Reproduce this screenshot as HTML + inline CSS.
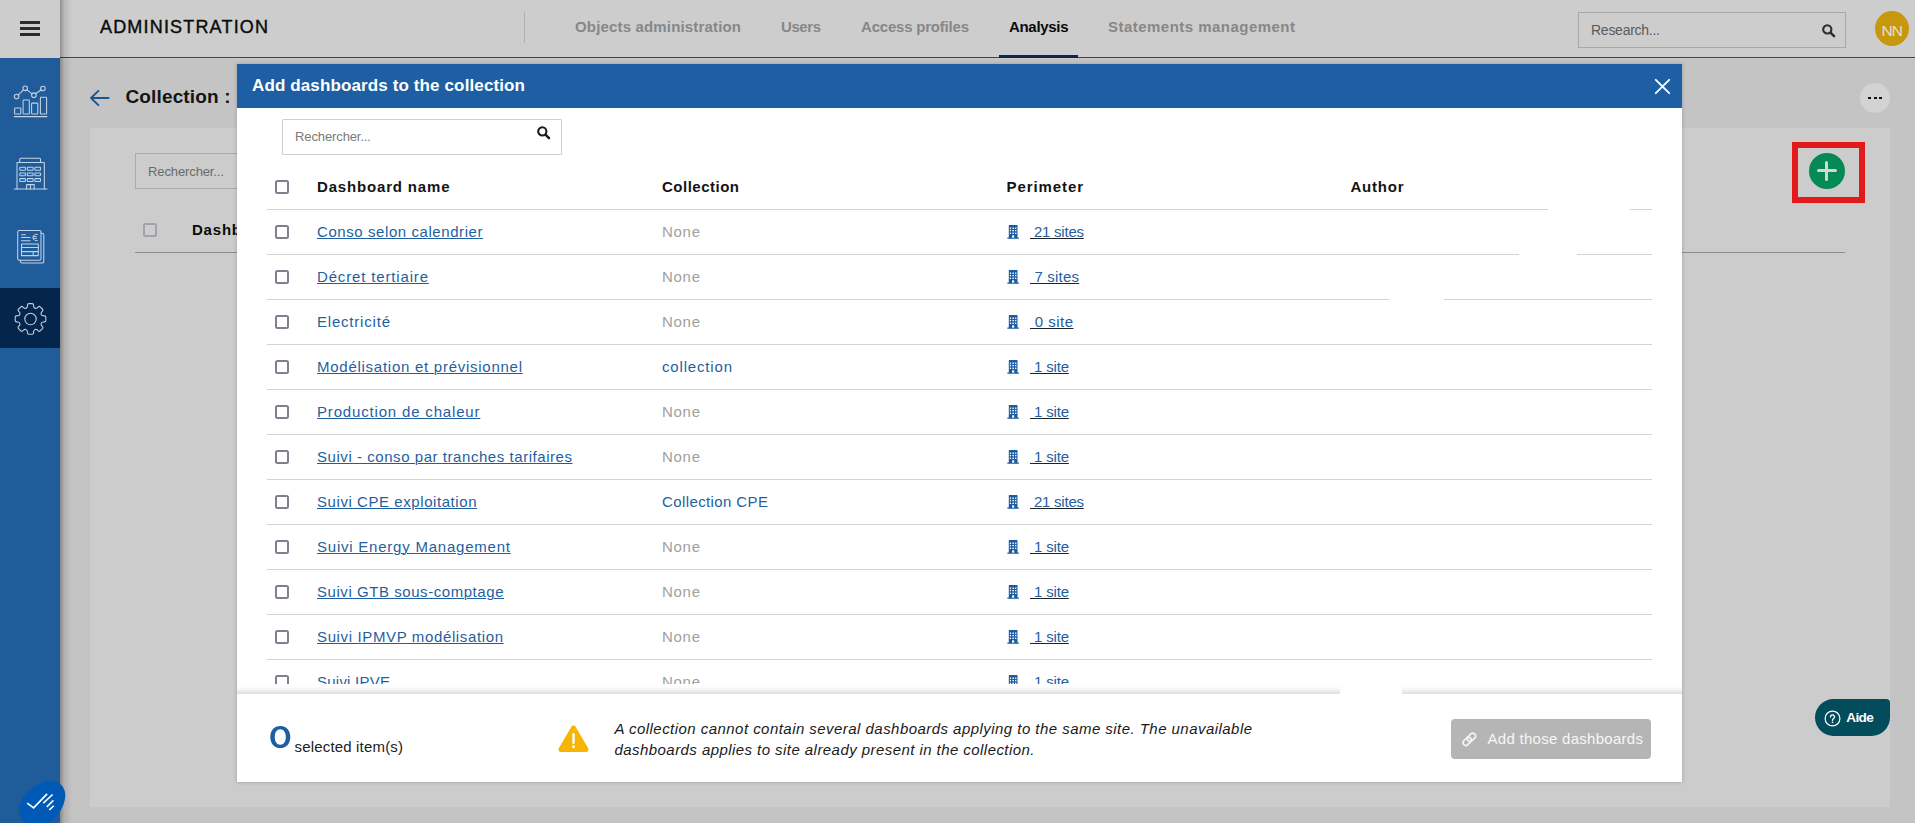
<!DOCTYPE html>
<html lang="en"><head><meta charset="utf-8"><title>Administration</title>
<style>
*{box-sizing:border-box;margin:0;padding:0}
html,body{width:1915px;height:823px;overflow:hidden;background:#c4c4c4;font-family:"Liberation Sans",sans-serif}
#root{position:relative;width:1915px;height:823px;overflow:hidden;background:#c4c4c4}
.abs{position:absolute}
.t{position:absolute;white-space:nowrap;line-height:1;display:block}
.cb{position:absolute;width:14px;height:14px;border:2px solid #7f7f90;border-radius:2.5px;background:#fff}
.hl{position:absolute;left:267px;width:1385px;height:1px;background:#d4d4d4}
.bld{position:absolute;display:block}
svg{display:block;position:absolute}
</style></head><body><div id="root">

<!-- ===== dimmed page behind ===== -->
<div class="abs" style="left:60px;top:0;width:1855px;height:57px;background:#cdcdcd"></div>
<div class="abs" style="left:60px;top:56.8px;width:1855px;height:1.2px;background:#36475d"></div>
<div class="abs" style="left:60px;top:58px;width:1855px;height:1px;background:#c8c8c8"></div>
<div class="abs" style="left:0;top:0;width:60px;height:58px;background:#cdcdcd"></div>
<!-- hamburger -->
<div class="abs" style="left:20px;top:21px;width:20px;height:2.6px;background:#2a2a2a"></div>
<div class="abs" style="left:20px;top:27.2px;width:20px;height:2.6px;background:#2a2a2a"></div>
<div class="abs" style="left:20px;top:33.4px;width:20px;height:2.6px;background:#2a2a2a"></div>
<span id="adm" class="t" style="left:100px;top:18.06px;font-size:18px;font-weight:400;color:#0b0b0b;letter-spacing:1.179px;-webkit-text-stroke:0.4px #0b0b0b;">ADMINISTRATION</span>
<div class="abs" style="left:524px;top:12px;width:1px;height:31px;background:#b1b1b1"></div>
<span id="tab1" class="t" style="left:575px;top:19.30px;font-size:15px;font-weight:700;color:#878787;letter-spacing:0.164px;">Objects administration</span><span id="tab2" class="t" style="left:781px;top:19.30px;font-size:15px;font-weight:700;color:#878787;letter-spacing:-0.426px;">Users</span><span id="tab3" class="t" style="left:861px;top:19.30px;font-size:15px;font-weight:700;color:#878787;letter-spacing:-0.206px;">Access profiles</span><span id="tab4" class="t" style="left:1009px;top:19.30px;font-size:15px;font-weight:700;color:#0a0a0a;letter-spacing:-0.315px;">Analysis</span><span id="tab5" class="t" style="left:1108px;top:19.30px;font-size:15px;font-weight:700;color:#878787;letter-spacing:0.472px;">Statements management</span>
<div class="abs" style="left:999px;top:54.6px;width:79px;height:3px;background:#0b2747"></div>
<!-- research box -->
<div class="abs" style="left:1578px;top:12px;width:268px;height:36px;border:1px solid #a9a9a9"></div>
<span id="research" class="t" style="left:1591px;top:23.35px;font-size:14px;font-weight:400;color:#5a5a5a;letter-spacing:-0.259px;">Research...</span>
<svg style="left:1822.2px;top:23.8px" width="15" height="15" viewBox="0 0 15 15"><circle cx="5.3" cy="5.4" r="4.1" fill="none" stroke="#2c2c2c" stroke-width="2.1"/><path d="M8.7 8.8L12.1 12.2" stroke="#2c2c2c" stroke-width="2.5" stroke-linecap="round"/></svg>
<div class="abs" style="left:1875px;top:11px;width:34px;height:35px;border-radius:50%;background:#c7980b"></div>
<span id="nn" class="t" style="left:1881.5px;top:22.58px;font-size:15.5px;font-weight:400;color:#e4e0d4;letter-spacing:-0.891px;">NN</span>

<!-- content -->
<svg style="left:89px;top:89px" width="22" height="18" viewBox="0 0 22 18"><path d="M19.6 9H2.4M9.4 1.9L2 9l7.4 7.1" fill="none" stroke="#1b5591" stroke-width="1.9" stroke-linecap="round" stroke-linejoin="round"/></svg>
<span id="colltitle" class="t" style="left:125.5px;top:86.92px;font-size:19px;font-weight:700;color:#141414;letter-spacing:0.141px;">Collection :</span>
<div class="abs" style="left:1860px;top:83px;width:30px;height:30px;border-radius:50%;background:#d3d3d3"></div>
<div class="abs" style="left:1868px;top:96.6px;width:3px;height:2.6px;background:#111"></div>
<div class="abs" style="left:1873.6px;top:96.6px;width:3px;height:2.6px;background:#111"></div>
<div class="abs" style="left:1879.2px;top:96.6px;width:3px;height:2.6px;background:#111"></div>
<div class="abs" style="left:90px;top:128px;width:1800px;height:679px;background:#cccccc"></div>
<div class="abs" style="left:135px;top:153px;width:200px;height:36px;border:1px solid #ababab"></div>
<span id="rech2" class="t" style="left:148px;top:164.50px;font-size:13px;font-weight:400;color:#6b6b6b;letter-spacing:-0.111px;">Rechercher...</span>
<div class="abs" style="left:143px;top:223px;width:14px;height:14px;border:2px solid #a2a2ab;border-radius:2.5px;background:#cdcdcd"></div>
<span id="dashb" class="t" style="left:192px;top:222.30px;font-size:15px;font-weight:700;color:#0a0a0a;letter-spacing:0.792px;">Dashboard name</span>
<div class="abs" style="left:135px;top:252px;width:1710px;height:1px;background:#8d8d8d"></div>
<!-- green plus + red annotation -->
<div class="abs" style="left:1808.9px;top:152.9px;width:36.2px;height:36.2px;border-radius:50%;background:#058a55"></div>
<div class="abs" style="left:1817px;top:169.3px;width:19.6px;height:3px;border-radius:1.5px;background:#d5d5d5"></div>
<div class="abs" style="left:1825.3px;top:160.9px;width:3px;height:19.7px;border-radius:1.5px;background:#d5d5d5"></div>
<div class="abs" style="left:1792px;top:142px;width:73px;height:61px;border:6px solid #e4191c"></div>
<!-- Aide -->
<div class="abs" style="left:1815px;top:698.8px;width:75px;height:37.2px;background:#024c5b;border-radius:18.6px 4px 18.6px 18.6px"></div>
<svg style="left:1823.8px;top:709.8px" width="17" height="17" viewBox="0 0 17 17"><circle cx="8.5" cy="8.5" r="7.4" fill="none" stroke="#fff" stroke-width="1.2"/><path d="M6.5 6.9a2 2 0 1 1 3.100 1.650c-.75.500-1.100.850-1.100 1.700" fill="none" stroke="#fff" stroke-width="1.35" stroke-linecap="round"/><circle cx="8.5" cy="12.3" r=".85" fill="#fff"/></svg>
<span id="aide" class="t" style="left:1846.3px;top:711.49px;font-size:13.6px;font-weight:700;color:#ffffff;letter-spacing:-0.656px;">Aide</span>

<!-- ===== sidebar ===== -->
<div class="abs" style="left:0;top:58px;width:60px;height:765px;background:#1f5c99"></div>
<div class="abs" style="left:0;top:288px;width:60px;height:60px;background:#05264c"></div>
<div class="abs" style="left:60px;top:0;width:12px;height:823px;background:linear-gradient(90deg,rgba(0,0,0,.30),rgba(0,0,0,.10) 35%,rgba(0,0,0,0))"></div>
<!--ICONS_START-->
<!-- chart icon -->
<svg style="left:0;top:58px" width="60" height="765" viewBox="0 58 60 765">
<g fill="none" stroke="#c3d3e6" stroke-width="1.05" stroke-linejoin="round" stroke-linecap="round">
<!-- chart -->
<path d="M14.2 116.6H47"/>
<rect x="14.6" y="107.9" width="6.2" height="6.1" rx=".6"/>
<rect x="23.1" y="99.9" width="6.2" height="14.1" rx=".6"/>
<rect x="31.6" y="103.1" width="6.2" height="10.9" rx=".6"/>
<rect x="40.4" y="97.3" width="6.2" height="16.7" rx=".6"/>
<circle cx="16.6" cy="96.5" r="2.3"/><circle cx="25.2" cy="88.3" r="2.3"/><circle cx="33.9" cy="95.2" r="2.3"/><circle cx="42.9" cy="88.5" r="2.3"/>
<path d="M18.3 94.9l5.2-5M26.9 89.8l5.2 4M35.6 93.7l5.6-3.9"/>
<!-- building -->
<path d="M14.2 189H47"/>
<path d="M17 189V162.4h27.3V189"/>
<path d="M19.7 162.4v-3.2a1 1 0 0 1 1-1h18.8a1 1 0 0 1 1 1v3.2"/>
<rect x="19.8" y="167.3" width="5.6" height="2.9" rx=".5"/><rect x="27.3" y="167.3" width="5.8" height="2.9" rx=".5"/><rect x="34.9" y="167.3" width="5.6" height="2.9" rx=".5"/>
<rect x="19.8" y="172.9" width="5.6" height="2.9" rx=".5"/><rect x="27.3" y="172.9" width="5.8" height="2.9" rx=".5"/><rect x="34.9" y="172.9" width="5.6" height="2.9" rx=".5"/>
<rect x="19.8" y="178.6" width="5.6" height="2.9" rx=".5"/><rect x="27.3" y="178.6" width="5.8" height="2.9" rx=".5"/><rect x="34.9" y="178.6" width="5.6" height="2.9" rx=".5"/>
<path d="M26.6 189v-4.4h7.6V189M30.4 184.6V189"/>
<!-- document -->
<path d="M41 233.2h1.3a1.5 1.5 0 0 1 1.5 1.5v26.8a1.5 1.5 0 0 1-1.5 1.5H22a1.5 1.5 0 0 1-1.5-1.5v-1.2"/>
<rect x="17.7" y="230.4" width="23.3" height="29.9" rx="1.5"/>
<path d="M21.5 234.7h4M21.5 237.5h8.6M21.5 240.7h8.6"/>
<path d="M37.4 234.4a3.3 3.3 0 1 0 0 6.2M33.2 236.6h3.2M33.2 238.4h3.2" stroke-width=".95"/>
<rect x="21.5" y="243.9" width="16.8" height="11.7"/>
<path d="M21.5 247.5h16.8M21.5 251.6h16.8M33.2 251.6v4"/>
</g>
<!-- gear -->
<g fill="none" stroke="#c6cdd8" stroke-width="1.1" stroke-linejoin="round">
<circle cx="30.5" cy="319" r="5.7"/>
<path d="M26.17 308.12Q27.37 307.63 27.42 306.33L27.48 304.89Q27.52 303.59 28.82 303.59L32.18 303.59Q33.48 303.59 33.52 304.89L33.58 306.33Q33.63 307.63 34.83 308.12L35.06 308.22Q36.26 308.72 37.21 307.83L38.27 306.85Q39.22 305.97 40.14 306.89L42.51 309.26Q43.43 310.18 42.55 311.13L41.57 312.19Q40.68 313.14 41.18 314.34L41.28 314.57Q41.77 315.77 43.07 315.82L44.51 315.88Q45.81 315.92 45.81 317.22L45.81 320.58Q45.81 321.88 44.51 321.92L43.07 321.98Q41.77 322.03 41.28 323.23L41.18 323.46Q40.68 324.66 41.57 325.61L42.55 326.67Q43.43 327.62 42.51 328.54L40.14 330.91Q39.22 331.83 38.27 330.95L37.21 329.97Q36.26 329.08 35.06 329.58L34.83 329.68Q33.63 330.17 33.58 331.47L33.52 332.91Q33.48 334.21 32.18 334.21L28.82 334.21Q27.52 334.21 27.48 332.91L27.42 331.47Q27.37 330.17 26.17 329.68L25.94 329.58Q24.74 329.08 23.79 329.97L22.73 330.95Q21.78 331.83 20.86 330.91L18.49 328.54Q17.57 327.62 18.45 326.67L19.43 325.61Q20.32 324.66 19.82 323.46L19.72 323.23Q19.23 322.03 17.93 321.98L16.49 321.92Q15.19 321.88 15.19 320.58L15.19 317.22Q15.19 315.92 16.49 315.88L17.93 315.82Q19.23 315.77 19.72 314.57L19.82 314.34Q20.32 313.14 19.43 312.19L18.45 311.13Q17.57 310.18 18.49 309.26L20.86 306.89Q21.78 305.97 22.73 306.85L23.79 307.83Q24.74 308.72 25.94 308.22Z"/>
</g>
</svg>
<svg style="left:15px;top:776px" width="56" height="47" viewBox="15 776 56 47">
<path d="M49 780.8c8.500 -1.200 16.800 5.000 16.300 15.000c-0.600 12.000 -9.000 24.000 -20.000 29.500c-10.000 5.000 -24.000 -1.000 -26.200 -12.000c-2.400 -12.500 12.000 -30.000 29.900 -32.500z" fill="#0059b4"/>
<g fill="none" stroke="#fff" stroke-width="1.5" stroke-linecap="butt"><path d="M27.2 803.1l6.4 4.8L47.1 793.9" stroke-width="1.7"/><path d="M43.3 803.1l9.3-8.6M46.8 806.9l6.6-6.5M49.3 809.9l4.5-4.1"/></g></svg>
<!--ICONS_END-->

<!-- ===== modal ===== -->
<div class="abs" style="left:237px;top:64px;width:1445px;height:718px;background:#fff;box-shadow:0 0 4px rgba(0,0,0,.22)"></div>
<div class="abs" style="left:237px;top:64px;width:1445px;height:44px;background:#1d5fa2"></div>
<span id="mtitle" class="t" style="left:252px;top:76.61px;font-size:17px;font-weight:700;color:#ffffff;letter-spacing:0.123px;">Add dashboards to the collection</span>
<svg style="left:1654px;top:78px" width="17" height="17" viewBox="0 0 17 17"><path d="M1.8 1.8L15.2 15.2M15.2 1.8L1.8 15.2" stroke="#fff" stroke-width="1.9" stroke-linecap="round"/></svg>
<div class="abs" style="left:282px;top:119px;width:280px;height:36px;border:1px solid #cfcfcf;border-radius:1px"></div>
<span id="rech" class="t" style="left:295px;top:129.50px;font-size:13px;font-weight:400;color:#7a7a7a;letter-spacing:-0.111px;">Rechercher...</span>
<svg style="left:537px;top:126px" width="15" height="15" viewBox="0 0 15 15"><circle cx="5.3" cy="5.4" r="4.1" fill="none" stroke="#1c1c1c" stroke-width="2.1"/><path d="M8.7 8.8L12 12.1" stroke="#1c1c1c" stroke-width="2.5" stroke-linecap="round"/></svg>
<div class="cb" style="left:275px;top:180px"></div>
<span id="h1" class="t" style="left:317px;top:179.30px;font-size:15px;font-weight:700;color:#141414;letter-spacing:0.831px;">Dashboard name</span><span id="h2" class="t" style="left:662px;top:179.30px;font-size:15px;font-weight:700;color:#141414;letter-spacing:0.498px;">Collection</span><span id="h3" class="t" style="left:1006.5px;top:179.30px;font-size:15px;font-weight:700;color:#141414;letter-spacing:0.91px;">Perimeter</span><span id="h4" class="t" style="left:1350.5px;top:179.30px;font-size:15px;font-weight:700;color:#141414;letter-spacing:0.769px;">Author</span>
<div class="hl" style="top:209px"></div>
<!-- scroll area (clipped at y=684) -->
<div class="abs" style="left:237px;top:0;width:1445px;height:684px;overflow:hidden"><div class="abs" style="left:-237px;top:0;width:1915px;height:823px">
<div class="cb" style="left:275px;top:225px"></div>
<span id="n0" class="t" style="left:317px;top:223.90px;font-size:15px;font-weight:400;color:#1f5f9f;letter-spacing:0.575px;text-decoration:underline;text-decoration-thickness:1px;text-underline-offset:1px;">Conso selon calendrier</span>
<span id="c0" class="t" style="left:662px;top:223.90px;font-size:15px;font-weight:400;color:#a0a0a0;letter-spacing:0.714px;">None</span>
<svg class="bld" style="left:1007px;top:225px" width="12" height="14" viewBox="0 0 12 14"><path fill="#1a5aa0" d="M2.3 0h7.7a0.5 0.5 0 0 1 .5.5V12.6h1.1a0.3 0.3 0 0 1 .3.3v.5a0.3 0.3 0 0 1-.3.3H0.6a0.3 0.3 0 0 1-.3-.3v-.5a0.3 0.3 0 0 1 .3-.3H1.8V0.5a0.5 0.5 0 0 1 .5-.5z"/><g fill="#fff"><rect x="2.8" y="2.5" width="1.3" height="1.4"/><rect x="5.4" y="2.5" width="1.5" height="1.4"/><rect x="8.1" y="2.5" width="1.3" height="1.4"/><rect x="2.8" y="4.9" width="1.3" height="1.4"/><rect x="5.4" y="4.9" width="1.5" height="1.4"/><rect x="8.1" y="4.9" width="1.3" height="1.4"/><rect x="2.8" y="7.6" width="1.3" height="1.4"/><rect x="5.4" y="7.6" width="1.5" height="1.4"/><rect x="8.1" y="7.6" width="1.3" height="1.4"/><rect x="5.1" y="10.3" width="2.1" height="2.4"/></g></svg>
<span id="p0" class="t" style="left:1030px;top:223.90px;font-size:15px;font-weight:400;color:#1f5f9f;letter-spacing:-0.234px;white-space:pre;text-decoration:underline;text-decoration-color:#222;text-decoration-thickness:1px;text-underline-offset:1px;"> 21 sites</span>
<div class="hl" style="top:254px"></div>
<div class="cb" style="left:275px;top:270px"></div>
<span id="n1" class="t" style="left:317px;top:268.90px;font-size:15px;font-weight:400;color:#1f5f9f;letter-spacing:0.842px;text-decoration:underline;text-decoration-thickness:1px;text-underline-offset:1px;">Décret tertiaire</span>
<span id="c1" class="t" style="left:662px;top:268.90px;font-size:15px;font-weight:400;color:#a0a0a0;letter-spacing:0.714px;">None</span>
<svg class="bld" style="left:1007px;top:270px" width="12" height="14" viewBox="0 0 12 14"><path fill="#1a5aa0" d="M2.3 0h7.7a0.5 0.5 0 0 1 .5.5V12.6h1.1a0.3 0.3 0 0 1 .3.3v.5a0.3 0.3 0 0 1-.3.3H0.6a0.3 0.3 0 0 1-.3-.3v-.5a0.3 0.3 0 0 1 .3-.3H1.8V0.5a0.5 0.5 0 0 1 .5-.5z"/><g fill="#fff"><rect x="2.8" y="2.5" width="1.3" height="1.4"/><rect x="5.4" y="2.5" width="1.5" height="1.4"/><rect x="8.1" y="2.5" width="1.3" height="1.4"/><rect x="2.8" y="4.9" width="1.3" height="1.4"/><rect x="5.4" y="4.9" width="1.5" height="1.4"/><rect x="8.1" y="4.9" width="1.3" height="1.4"/><rect x="2.8" y="7.6" width="1.3" height="1.4"/><rect x="5.4" y="7.6" width="1.5" height="1.4"/><rect x="8.1" y="7.6" width="1.3" height="1.4"/><rect x="5.1" y="10.3" width="2.1" height="2.4"/></g></svg>
<span id="p1" class="t" style="left:1030px;top:268.90px;font-size:15px;font-weight:400;color:#1f5f9f;letter-spacing:0.21px;white-space:pre;text-decoration:underline;text-decoration-color:#222;text-decoration-thickness:1px;text-underline-offset:1px;"> 7 sites</span>
<div class="hl" style="top:299px"></div>
<div class="cb" style="left:275px;top:315px"></div>
<span id="n2" class="t" style="left:317px;top:313.90px;font-size:15px;font-weight:400;color:#1f5f9f;letter-spacing:0.797px;">Electricité</span>
<span id="c2" class="t" style="left:662px;top:313.90px;font-size:15px;font-weight:400;color:#a0a0a0;letter-spacing:0.714px;">None</span>
<svg class="bld" style="left:1007px;top:315px" width="12" height="14" viewBox="0 0 12 14"><path fill="#1a5aa0" d="M2.3 0h7.7a0.5 0.5 0 0 1 .5.5V12.6h1.1a0.3 0.3 0 0 1 .3.3v.5a0.3 0.3 0 0 1-.3.3H0.6a0.3 0.3 0 0 1-.3-.3v-.5a0.3 0.3 0 0 1 .3-.3H1.8V0.5a0.5 0.5 0 0 1 .5-.5z"/><g fill="#fff"><rect x="2.8" y="2.5" width="1.3" height="1.4"/><rect x="5.4" y="2.5" width="1.5" height="1.4"/><rect x="8.1" y="2.5" width="1.3" height="1.4"/><rect x="2.8" y="4.9" width="1.3" height="1.4"/><rect x="5.4" y="4.9" width="1.5" height="1.4"/><rect x="8.1" y="4.9" width="1.3" height="1.4"/><rect x="2.8" y="7.6" width="1.3" height="1.4"/><rect x="5.4" y="7.6" width="1.5" height="1.4"/><rect x="8.1" y="7.6" width="1.3" height="1.4"/><rect x="5.1" y="10.3" width="2.1" height="2.4"/></g></svg>
<span id="p2" class="t" style="left:1030px;top:313.90px;font-size:15px;font-weight:400;color:#1f5f9f;letter-spacing:0.495px;white-space:pre;text-decoration:underline;text-decoration-color:#222;text-decoration-thickness:1px;text-underline-offset:1px;"> 0 site</span>
<div class="hl" style="top:344px"></div>
<div class="cb" style="left:275px;top:360px"></div>
<span id="n3" class="t" style="left:317px;top:358.90px;font-size:15px;font-weight:400;color:#1f5f9f;letter-spacing:0.737px;text-decoration:underline;text-decoration-thickness:1px;text-underline-offset:1px;">Modélisation et prévisionnel</span>
<span id="c3" class="t" style="left:662px;top:358.90px;font-size:15px;font-weight:400;color:#1f5f9f;letter-spacing:0.828px;">collection</span>
<svg class="bld" style="left:1007px;top:360px" width="12" height="14" viewBox="0 0 12 14"><path fill="#1a5aa0" d="M2.3 0h7.7a0.5 0.5 0 0 1 .5.5V12.6h1.1a0.3 0.3 0 0 1 .3.3v.5a0.3 0.3 0 0 1-.3.3H0.6a0.3 0.3 0 0 1-.3-.3v-.5a0.3 0.3 0 0 1 .3-.3H1.8V0.5a0.5 0.5 0 0 1 .5-.5z"/><g fill="#fff"><rect x="2.8" y="2.5" width="1.3" height="1.4"/><rect x="5.4" y="2.5" width="1.5" height="1.4"/><rect x="8.1" y="2.5" width="1.3" height="1.4"/><rect x="2.8" y="4.9" width="1.3" height="1.4"/><rect x="5.4" y="4.9" width="1.5" height="1.4"/><rect x="8.1" y="4.9" width="1.3" height="1.4"/><rect x="2.8" y="7.6" width="1.3" height="1.4"/><rect x="5.4" y="7.6" width="1.5" height="1.4"/><rect x="8.1" y="7.6" width="1.3" height="1.4"/><rect x="5.1" y="10.3" width="2.1" height="2.4"/></g></svg>
<span id="p3" class="t" style="left:1030px;top:358.90px;font-size:15px;font-weight:400;color:#1f5f9f;letter-spacing:-0.172px;white-space:pre;text-decoration:underline;text-decoration-color:#222;text-decoration-thickness:1px;text-underline-offset:1px;"> 1 site</span>
<div class="hl" style="top:389px"></div>
<div class="cb" style="left:275px;top:405px"></div>
<span id="n4" class="t" style="left:317px;top:403.90px;font-size:15px;font-weight:400;color:#1f5f9f;letter-spacing:0.828px;text-decoration:underline;text-decoration-thickness:1px;text-underline-offset:1px;">Production de chaleur</span>
<span id="c4" class="t" style="left:662px;top:403.90px;font-size:15px;font-weight:400;color:#a0a0a0;letter-spacing:0.714px;">None</span>
<svg class="bld" style="left:1007px;top:405px" width="12" height="14" viewBox="0 0 12 14"><path fill="#1a5aa0" d="M2.3 0h7.7a0.5 0.5 0 0 1 .5.5V12.6h1.1a0.3 0.3 0 0 1 .3.3v.5a0.3 0.3 0 0 1-.3.3H0.6a0.3 0.3 0 0 1-.3-.3v-.5a0.3 0.3 0 0 1 .3-.3H1.8V0.5a0.5 0.5 0 0 1 .5-.5z"/><g fill="#fff"><rect x="2.8" y="2.5" width="1.3" height="1.4"/><rect x="5.4" y="2.5" width="1.5" height="1.4"/><rect x="8.1" y="2.5" width="1.3" height="1.4"/><rect x="2.8" y="4.9" width="1.3" height="1.4"/><rect x="5.4" y="4.9" width="1.5" height="1.4"/><rect x="8.1" y="4.9" width="1.3" height="1.4"/><rect x="2.8" y="7.6" width="1.3" height="1.4"/><rect x="5.4" y="7.6" width="1.5" height="1.4"/><rect x="8.1" y="7.6" width="1.3" height="1.4"/><rect x="5.1" y="10.3" width="2.1" height="2.4"/></g></svg>
<span id="p4" class="t" style="left:1030px;top:403.90px;font-size:15px;font-weight:400;color:#1f5f9f;letter-spacing:-0.172px;white-space:pre;text-decoration:underline;text-decoration-color:#222;text-decoration-thickness:1px;text-underline-offset:1px;"> 1 site</span>
<div class="hl" style="top:434px"></div>
<div class="cb" style="left:275px;top:450px"></div>
<span id="n5" class="t" style="left:317px;top:448.90px;font-size:15px;font-weight:400;color:#1f5f9f;letter-spacing:0.553px;text-decoration:underline;text-decoration-thickness:1px;text-underline-offset:1px;">Suivi - conso par tranches tarifaires</span>
<span id="c5" class="t" style="left:662px;top:448.90px;font-size:15px;font-weight:400;color:#a0a0a0;letter-spacing:0.714px;">None</span>
<svg class="bld" style="left:1007px;top:450px" width="12" height="14" viewBox="0 0 12 14"><path fill="#1a5aa0" d="M2.3 0h7.7a0.5 0.5 0 0 1 .5.5V12.6h1.1a0.3 0.3 0 0 1 .3.3v.5a0.3 0.3 0 0 1-.3.3H0.6a0.3 0.3 0 0 1-.3-.3v-.5a0.3 0.3 0 0 1 .3-.3H1.8V0.5a0.5 0.5 0 0 1 .5-.5z"/><g fill="#fff"><rect x="2.8" y="2.5" width="1.3" height="1.4"/><rect x="5.4" y="2.5" width="1.5" height="1.4"/><rect x="8.1" y="2.5" width="1.3" height="1.4"/><rect x="2.8" y="4.9" width="1.3" height="1.4"/><rect x="5.4" y="4.9" width="1.5" height="1.4"/><rect x="8.1" y="4.9" width="1.3" height="1.4"/><rect x="2.8" y="7.6" width="1.3" height="1.4"/><rect x="5.4" y="7.6" width="1.5" height="1.4"/><rect x="8.1" y="7.6" width="1.3" height="1.4"/><rect x="5.1" y="10.3" width="2.1" height="2.4"/></g></svg>
<span id="p5" class="t" style="left:1030px;top:448.90px;font-size:15px;font-weight:400;color:#1f5f9f;letter-spacing:-0.172px;white-space:pre;text-decoration:underline;text-decoration-color:#222;text-decoration-thickness:1px;text-underline-offset:1px;"> 1 site</span>
<div class="hl" style="top:479px"></div>
<div class="cb" style="left:275px;top:495px"></div>
<span id="n6" class="t" style="left:317px;top:493.90px;font-size:15px;font-weight:400;color:#1f5f9f;letter-spacing:0.568px;text-decoration:underline;text-decoration-thickness:1px;text-underline-offset:1px;">Suivi CPE exploitation</span>
<span id="c6" class="t" style="left:662px;top:493.90px;font-size:15px;font-weight:400;color:#1f5f9f;letter-spacing:0.393px;">Collection CPE</span>
<svg class="bld" style="left:1007px;top:495px" width="12" height="14" viewBox="0 0 12 14"><path fill="#1a5aa0" d="M2.3 0h7.7a0.5 0.5 0 0 1 .5.5V12.6h1.1a0.3 0.3 0 0 1 .3.3v.5a0.3 0.3 0 0 1-.3.3H0.6a0.3 0.3 0 0 1-.3-.3v-.5a0.3 0.3 0 0 1 .3-.3H1.8V0.5a0.5 0.5 0 0 1 .5-.5z"/><g fill="#fff"><rect x="2.8" y="2.5" width="1.3" height="1.4"/><rect x="5.4" y="2.5" width="1.5" height="1.4"/><rect x="8.1" y="2.5" width="1.3" height="1.4"/><rect x="2.8" y="4.9" width="1.3" height="1.4"/><rect x="5.4" y="4.9" width="1.5" height="1.4"/><rect x="8.1" y="4.9" width="1.3" height="1.4"/><rect x="2.8" y="7.6" width="1.3" height="1.4"/><rect x="5.4" y="7.6" width="1.5" height="1.4"/><rect x="8.1" y="7.6" width="1.3" height="1.4"/><rect x="5.1" y="10.3" width="2.1" height="2.4"/></g></svg>
<span id="p6" class="t" style="left:1030px;top:493.90px;font-size:15px;font-weight:400;color:#1f5f9f;letter-spacing:-0.234px;white-space:pre;text-decoration:underline;text-decoration-color:#222;text-decoration-thickness:1px;text-underline-offset:1px;"> 21 sites</span>
<div class="hl" style="top:524px"></div>
<div class="cb" style="left:275px;top:540px"></div>
<span id="n7" class="t" style="left:317px;top:538.90px;font-size:15px;font-weight:400;color:#1f5f9f;letter-spacing:0.776px;text-decoration:underline;text-decoration-thickness:1px;text-underline-offset:1px;">Suivi Energy Management</span>
<span id="c7" class="t" style="left:662px;top:538.90px;font-size:15px;font-weight:400;color:#a0a0a0;letter-spacing:0.714px;">None</span>
<svg class="bld" style="left:1007px;top:540px" width="12" height="14" viewBox="0 0 12 14"><path fill="#1a5aa0" d="M2.3 0h7.7a0.5 0.5 0 0 1 .5.5V12.6h1.1a0.3 0.3 0 0 1 .3.3v.5a0.3 0.3 0 0 1-.3.3H0.6a0.3 0.3 0 0 1-.3-.3v-.5a0.3 0.3 0 0 1 .3-.3H1.8V0.5a0.5 0.5 0 0 1 .5-.5z"/><g fill="#fff"><rect x="2.8" y="2.5" width="1.3" height="1.4"/><rect x="5.4" y="2.5" width="1.5" height="1.4"/><rect x="8.1" y="2.5" width="1.3" height="1.4"/><rect x="2.8" y="4.9" width="1.3" height="1.4"/><rect x="5.4" y="4.9" width="1.5" height="1.4"/><rect x="8.1" y="4.9" width="1.3" height="1.4"/><rect x="2.8" y="7.6" width="1.3" height="1.4"/><rect x="5.4" y="7.6" width="1.5" height="1.4"/><rect x="8.1" y="7.6" width="1.3" height="1.4"/><rect x="5.1" y="10.3" width="2.1" height="2.4"/></g></svg>
<span id="p7" class="t" style="left:1030px;top:538.90px;font-size:15px;font-weight:400;color:#1f5f9f;letter-spacing:-0.172px;white-space:pre;text-decoration:underline;text-decoration-color:#222;text-decoration-thickness:1px;text-underline-offset:1px;"> 1 site</span>
<div class="hl" style="top:569px"></div>
<div class="cb" style="left:275px;top:585px"></div>
<span id="n8" class="t" style="left:317px;top:583.90px;font-size:15px;font-weight:400;color:#1f5f9f;letter-spacing:0.557px;text-decoration:underline;text-decoration-thickness:1px;text-underline-offset:1px;">Suivi GTB sous-comptage</span>
<span id="c8" class="t" style="left:662px;top:583.90px;font-size:15px;font-weight:400;color:#a0a0a0;letter-spacing:0.714px;">None</span>
<svg class="bld" style="left:1007px;top:585px" width="12" height="14" viewBox="0 0 12 14"><path fill="#1a5aa0" d="M2.3 0h7.7a0.5 0.5 0 0 1 .5.5V12.6h1.1a0.3 0.3 0 0 1 .3.3v.5a0.3 0.3 0 0 1-.3.3H0.6a0.3 0.3 0 0 1-.3-.3v-.5a0.3 0.3 0 0 1 .3-.3H1.8V0.5a0.5 0.5 0 0 1 .5-.5z"/><g fill="#fff"><rect x="2.8" y="2.5" width="1.3" height="1.4"/><rect x="5.4" y="2.5" width="1.5" height="1.4"/><rect x="8.1" y="2.5" width="1.3" height="1.4"/><rect x="2.8" y="4.9" width="1.3" height="1.4"/><rect x="5.4" y="4.9" width="1.5" height="1.4"/><rect x="8.1" y="4.9" width="1.3" height="1.4"/><rect x="2.8" y="7.6" width="1.3" height="1.4"/><rect x="5.4" y="7.6" width="1.5" height="1.4"/><rect x="8.1" y="7.6" width="1.3" height="1.4"/><rect x="5.1" y="10.3" width="2.1" height="2.4"/></g></svg>
<span id="p8" class="t" style="left:1030px;top:583.90px;font-size:15px;font-weight:400;color:#1f5f9f;letter-spacing:-0.172px;white-space:pre;text-decoration:underline;text-decoration-color:#222;text-decoration-thickness:1px;text-underline-offset:1px;"> 1 site</span>
<div class="hl" style="top:614px"></div>
<div class="cb" style="left:275px;top:630px"></div>
<span id="n9" class="t" style="left:317px;top:628.90px;font-size:15px;font-weight:400;color:#1f5f9f;letter-spacing:0.632px;text-decoration:underline;text-decoration-thickness:1px;text-underline-offset:1px;">Suivi IPMVP modélisation</span>
<span id="c9" class="t" style="left:662px;top:628.90px;font-size:15px;font-weight:400;color:#a0a0a0;letter-spacing:0.714px;">None</span>
<svg class="bld" style="left:1007px;top:630px" width="12" height="14" viewBox="0 0 12 14"><path fill="#1a5aa0" d="M2.3 0h7.7a0.5 0.5 0 0 1 .5.5V12.6h1.1a0.3 0.3 0 0 1 .3.3v.5a0.3 0.3 0 0 1-.3.3H0.6a0.3 0.3 0 0 1-.3-.3v-.5a0.3 0.3 0 0 1 .3-.3H1.8V0.5a0.5 0.5 0 0 1 .5-.5z"/><g fill="#fff"><rect x="2.8" y="2.5" width="1.3" height="1.4"/><rect x="5.4" y="2.5" width="1.5" height="1.4"/><rect x="8.1" y="2.5" width="1.3" height="1.4"/><rect x="2.8" y="4.9" width="1.3" height="1.4"/><rect x="5.4" y="4.9" width="1.5" height="1.4"/><rect x="8.1" y="4.9" width="1.3" height="1.4"/><rect x="2.8" y="7.6" width="1.3" height="1.4"/><rect x="5.4" y="7.6" width="1.5" height="1.4"/><rect x="8.1" y="7.6" width="1.3" height="1.4"/><rect x="5.1" y="10.3" width="2.1" height="2.4"/></g></svg>
<span id="p9" class="t" style="left:1030px;top:628.90px;font-size:15px;font-weight:400;color:#1f5f9f;letter-spacing:-0.172px;white-space:pre;text-decoration:underline;text-decoration-color:#222;text-decoration-thickness:1px;text-underline-offset:1px;"> 1 site</span>
<div class="hl" style="top:659px"></div>
<div class="cb" style="left:275px;top:675px"></div>
<span id="n10" class="t" style="left:317px;top:673.90px;font-size:15px;font-weight:400;color:#1f5f9f;letter-spacing:0.236px;text-decoration:underline;text-decoration-thickness:1px;text-underline-offset:1px;">Suivi IPVE</span>
<span id="c10" class="t" style="left:662px;top:673.90px;font-size:15px;font-weight:400;color:#a0a0a0;letter-spacing:0.714px;">None</span>
<svg class="bld" style="left:1007px;top:675px" width="12" height="14" viewBox="0 0 12 14"><path fill="#1a5aa0" d="M2.3 0h7.7a0.5 0.5 0 0 1 .5.5V12.6h1.1a0.3 0.3 0 0 1 .3.3v.5a0.3 0.3 0 0 1-.3.3H0.6a0.3 0.3 0 0 1-.3-.3v-.5a0.3 0.3 0 0 1 .3-.3H1.8V0.5a0.5 0.5 0 0 1 .5-.5z"/><g fill="#fff"><rect x="2.8" y="2.5" width="1.3" height="1.4"/><rect x="5.4" y="2.5" width="1.5" height="1.4"/><rect x="8.1" y="2.5" width="1.3" height="1.4"/><rect x="2.8" y="4.9" width="1.3" height="1.4"/><rect x="5.4" y="4.9" width="1.5" height="1.4"/><rect x="8.1" y="4.9" width="1.3" height="1.4"/><rect x="2.8" y="7.6" width="1.3" height="1.4"/><rect x="5.4" y="7.6" width="1.5" height="1.4"/><rect x="8.1" y="7.6" width="1.3" height="1.4"/><rect x="5.1" y="10.3" width="2.1" height="2.4"/></g></svg>
<span id="p10" class="t" style="left:1030px;top:673.90px;font-size:15px;font-weight:400;color:#1f5f9f;letter-spacing:-0.172px;white-space:pre;text-decoration:underline;text-decoration-color:#222;text-decoration-thickness:1px;text-underline-offset:1px;"> 1 site</span>
<div class="hl" style="top:704px"></div>
</div></div>
<div class="abs" style="left:1548px;top:208px;width:82px;height:3px;background:#fff"></div>
<div class="abs" style="left:1519px;top:253px;width:58px;height:3px;background:#fff"></div>
<div class="abs" style="left:1389px;top:298px;width:55px;height:3px;background:#fff"></div>
<!-- footer -->
<div class="abs" style="left:237px;top:684px;width:1445px;height:9.5px;background:linear-gradient(#fff,#fbfbfb 40%,#dedede)"></div>
<svg style="left:269px;top:724px" width="23" height="26" viewBox="269 724 23 26"><path fill="#1d5fa2" fill-rule="evenodd" d="M280.3 725.9c6.2 0 10 4.600 10 11.100s-3.800 11.100-10 11.100s-10-4.600-10-11.100s3.800-11.100 10-11.100zM280.3 729.3c-3.500 0-5.500 3.100-5.500 7.700s2.000 7.700 5.500 7.700s5.500-3.100 5.500-7.700s-2.000-7.700-5.500-7.700z"/></svg><span id="sel" class="t" style="left:294.5px;top:739.30px;font-size:15px;font-weight:400;color:#222222;letter-spacing:0.175px;">selected item(s)</span>
<svg style="left:558px;top:724.9px" width="31" height="27" viewBox="0 0 31 27"><path d="M13.4 1.7a2.4 2.4 0 0 1 4.2 0l12.6 21.6a2.4 2.4 0 0 1-2.1 3.6H2.9a2.4 2.4 0 0 1-2.1-3.6z" fill="#f5b502"/><path d="M15.5 9.2v8.6" stroke="#fff" stroke-width="2.4" stroke-linecap="round"/><circle cx="15.5" cy="21.8" r="1.45" fill="#fff"/></svg>
<div class="abs" style="left:1340px;top:684px;width:62px;height:10px;background:#fff"></div>
<span id="w1" class="t" style="left:614.5px;top:721.30px;font-size:15px;font-weight:400;color:#1a1a1a;letter-spacing:0.457px;font-style:italic;">A collection cannot contain several dashboards applying to the same site. The unavailable</span><span id="w2" class="t" style="left:614.5px;top:742.10px;font-size:15px;font-weight:400;color:#1a1a1a;letter-spacing:0.44px;font-style:italic;">dashboards applies to site already present in the collection.</span>
<div class="abs" style="left:1451px;top:719px;width:200px;height:40px;border-radius:4px;background:#b5b5b5"></div>
<svg style="left:1460px;top:730px" width="19" height="19" viewBox="1460 730 19 19"><g transform="translate(1469.3 739.3) rotate(-43)" fill="none" stroke="#f6f6f6" stroke-width="1.7"><rect x="-7.6" y="-2.8" width="9.3" height="5.6" rx="2.8"/><rect x="-1.7" y="-2.8" width="9.3" height="5.6" rx="2.8"/></g></svg>
<span id="btn" class="t" style="left:1487.5px;top:731.30px;font-size:15px;font-weight:400;color:#f7f7f7;letter-spacing:0.283px;">Add those dashboards</span>
</div></body></html>
